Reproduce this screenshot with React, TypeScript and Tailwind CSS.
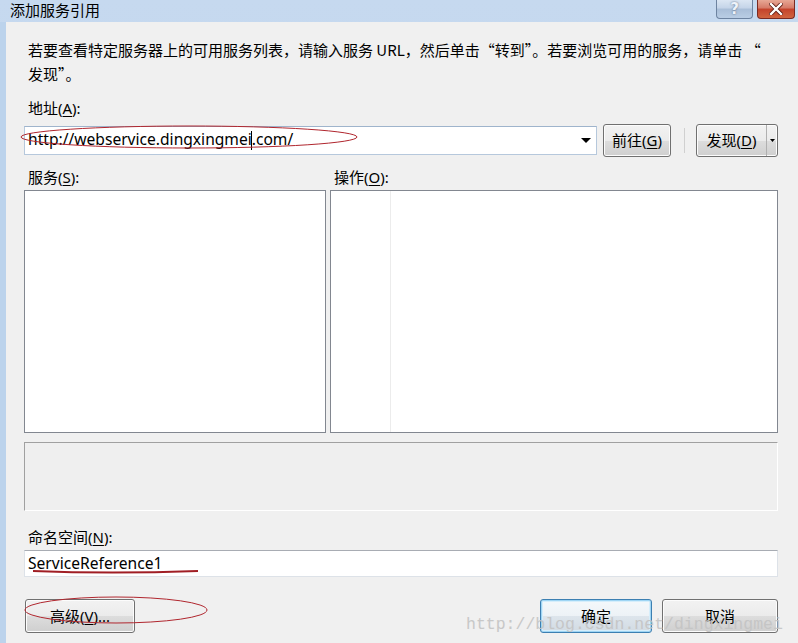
import React from "react";

const font = { fontFamily: '"Noto Sans", "Noto Sans CJK SC", sans-serif' };
const cjkFirst = { fontFamily: '"Noto Sans CJK SC", "Noto Sans", sans-serif' };

function U({ children }: { children: React.ReactNode }) {
  return <span className="underline underline-offset-2">{children}</span>;
}

const btn =
  "flex items-center justify-center rounded-[3px] border border-[#707070] bg-[linear-gradient(to_bottom,#f2f2f2_0%,#ebebeb_50%,#dddddd_50%,#cfcfcf_100%)] shadow-[inset_0_0_0_1px_#fcfcfc] text-[15px] text-black";

export default function App() {
  return (
    <div
      className="relative w-[798px] h-[643px] overflow-hidden flex flex-col bg-[linear-gradient(to_bottom,#c6d9ef,#b9d0ea)]"
      style={font}
    >
      {/* Title bar */}
      <div className="h-[22px] flex items-start shrink-0">
        <div className="pl-[10px] text-[15px] leading-[20px] text-black">添加服务引用</div>
        <div className="flex-1" />
        <div className="flex gap-[4px] mr-[3px]">
          <div className="w-[37px] h-[19px] rounded-b-[4px] border border-t-0 border-[#6d83a0] bg-[linear-gradient(to_bottom,#dbe6f3_0%,#c4d4e8_45%,#a9bed8_50%,#b9cde4_100%)] flex items-center justify-center">
            <span
              className="text-[15px] leading-none font-bold text-[#eef3fa] [text-shadow:0_0_2px_#50607a]"
              style={{ fontFamily: '"DejaVu Sans", sans-serif' }}
            >
              ?
            </span>
          </div>
          <div className="w-[38px] h-[19px] rounded-b-[4px] border border-t-0 border-[#7a2a22] bg-[linear-gradient(to_bottom,#e7a795_0%,#d57a67_45%,#c4422b_50%,#d0643f_100%)] flex items-center justify-center">
            <svg width="14" height="12" viewBox="0 0 14 12">
              <path d="M2 1 L12 11 M12 1 L2 11" stroke="#5b1a12" strokeWidth="4" strokeLinecap="square" />
              <path d="M2 1 L12 11 M12 1 L2 11" stroke="#ffffff" strokeWidth="2.4" strokeLinecap="square" />
            </svg>
          </div>
        </div>
      </div>

      <div className="flex flex-1">
        <div className="w-[6px] shrink-0 bg-[#bcd3ec]" />
        <div className="flex-1 bg-[#f0f0f0] pl-[18px] pr-[20px] pt-[16px] flex flex-col">
          <div className="pl-[4px] text-[15px] leading-[24px] text-black" style={cjkFirst}>
            若要查看特定服务器上的可用服务列表，请输入服务 URL，然后单击“转到”。若要浏览可用的服务，请单击 “
            <br />
            发现”。
          </div>

          <div className="mt-[10px] pl-[4px] text-[15px] leading-[24px]">
            地址(<U>A</U>):
          </div>

          <div className="mt-[4px] h-[33px] flex items-center">
            <div className="relative w-[573px] h-[29px] bg-white border border-[#b6c8dc] border-t-[#9fb4cc] flex items-center pl-[3px]">
              <span className="text-[15.6px] leading-none text-black">
                http://webservice.dingxingmei
                <span className="inline-block w-[1px] h-[19px] bg-black align-middle -mx-[0.5px]" />
                .com/
              </span>
              <div className="flex-1" />
              <svg width="10" height="6" viewBox="0 0 10 6" className="mr-[5px]">
                <path d="M0 0 L10 0 L5 5 Z" fill="#000" />
              </svg>
            </div>
            <div className={`${btn} ml-[6px] w-[68px] h-[33px]`}>
              前往(<U>G</U>)
            </div>
            <div className="ml-[13px] w-[1px] h-[25px] bg-[#d0d0d0]" />
            <div className={`${btn} ml-[11px] w-[82px] h-[33px] !justify-start`}>
              <span className="w-[69px] text-center">
                发现(<U>D</U>)
              </span>
              <div className="w-[1px] h-full bg-[#b0b0b0]" />
              <div className="flex-1 flex items-center justify-center">
                <svg width="5" height="3" viewBox="0 0 5 3">
                  <path d="M0 0 L5 0 L2.5 3 Z" fill="#000" />
                </svg>
              </div>
            </div>
          </div>

          <div className="mt-[8px] flex text-[15px] leading-[24px]">
            <div className="w-[306px] pl-[4px]">
              服务(<U>S</U>):
            </div>
            <div className="pl-[4px]">
              操作(<U>O</U>):
            </div>
          </div>

          <div className="mt-[1px] flex h-[243px]">
            <div className="w-[302px] h-full bg-white border border-[#828790]" />
            <div className="ml-[4px] flex-1 h-full bg-white border border-[#828790] flex">
              <div className="w-[60px] border-r border-[#ececec]" />
            </div>
          </div>

          <div className="mt-[9px] h-[69px] bg-[#efefef] border border-[#a0a0a0] border-b-white border-r-white" />

          <div className="mt-[14px] pl-[4px] text-[15px] leading-[24px]">
            命名空间(<U>N</U>):
          </div>

          <div className="mt-[1px] h-[27px] bg-white border border-[#dde2e8] border-t-[#a8acb3] flex items-center pl-[3px]">
            <span className="text-[15.6px] leading-none text-black">ServiceReference1</span>
          </div>

          <div className="mt-[22px] flex">
            <div className={`${btn} ml-[1px] w-[110px] h-[34px]`}>
              高级(<U>V</U>)...
            </div>
            <div className="flex-1" />
            <div className="w-[112px] h-[34px] rounded-[3px] border border-[#3c7fb1] shadow-[inset_0_0_0_1px_#9fd5f4,inset_0_0_0_2px_#d6eefb] bg-[linear-gradient(to_bottom,#f4f8fb_0%,#edf2f6_50%,#dde5ec_50%,#d2dbe3_100%)] flex items-center justify-center text-[15px]">
              确定
            </div>
            <div className={`${btn} ml-[10px] w-[116px] h-[34px]`}>取消</div>
          </div>
        </div>
      </div>

      {/* Annotations */}
      <svg className="absolute left-0 top-0 pointer-events-none" width="798" height="643">
        <ellipse cx="189" cy="137" rx="168" ry="11" fill="none" stroke="#b0262e" strokeWidth="1" />
        <path d="M33 571 Q 110 574 198 571" fill="none" stroke="#a01e24" strokeWidth="2" />
        <ellipse cx="116" cy="610" rx="91" ry="13" fill="none" stroke="#b0262e" strokeWidth="1" />
      </svg>
      <div
        className="absolute left-[466px] top-[613px] text-[16.5px] leading-[24px] text-[#c4c4c4] opacity-90 pointer-events-none whitespace-nowrap"
        style={{ fontFamily: '"Liberation Mono", "DejaVu Serif", monospace' }}
      >
        http://blog.csdn.net/dingxingmei
      </div>
    </div>
  );
}
